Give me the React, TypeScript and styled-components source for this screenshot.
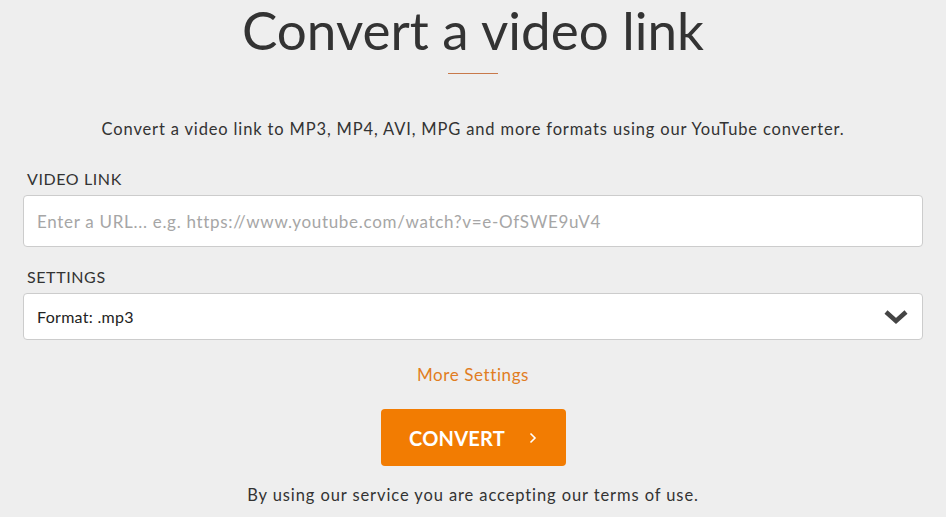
import styled, { createGlobalStyle } from 'styled-components';

const GlobalStyle = createGlobalStyle`
  html, body {
    margin: 0;
    padding: 0;
    background: #eeeeee;
    font-family: Lato, "Open Sans", sans-serif;
    color: #333333;
  }
`;

const Page = styled.main`
  max-width: 900px;
  margin: 0 auto;
  padding: 0 0 20px;
  display: flex;
  flex-direction: column;
  align-items: center;
`;

const Title = styled.h1`
  margin: 0;
  font-size: 53px;
  font-weight: 400;
  line-height: 60px;
  color: #333333;
`;

const Divider = styled.hr`
  width: 50px;
  height: 1px;
  border: 0;
  background: #c8794a;
  margin: 13px 0 0;
`;

const Lead = styled.p`
  margin: 45px 0 0;
  font-size: 16.5px;
  line-height: 20px;
  letter-spacing: 0.85px;
  color: #333333;
`;

const Form = styled.form`
  align-self: stretch;
  display: flex;
  flex-direction: column;
  margin-top: 30px;
`;

const Label = styled.label`
  font-size: 16px;
  line-height: 20px;
  letter-spacing: 0.6px;
  padding-left: 4px;
  margin-bottom: 6px;
  color: #333333;
`;

const Field = styled.div<{ $height: number }>`
  height: ${({ $height }) => $height}px;
  box-sizing: border-box;
  background: #ffffff;
  border: 1px solid #cccccc;
  border-radius: 4px;
  display: flex;
  align-items: center;
  padding: 0 14px 0 13px;
  margin-bottom: 20px;
`;

const Input = styled.input`
  flex: 1;
  border: 0;
  outline: none;
  background: transparent;
  font-family: inherit;
  font-size: 17px;
  letter-spacing: 0.7px;
  color: #333333;
  padding: 0;

  &::placeholder {
    color: #a6a6a6;
  }
`;

const SelectText = styled.span`
  flex: 1;
  font-size: 16px;
  letter-spacing: 0.3px;
  color: #222222;
`;

const MoreLink = styled.a`
  align-self: center;
  margin-top: 4px;
  font-size: 17px;
  line-height: 22px;
  letter-spacing: 0.6px;
  color: #e17d22;
  text-decoration: none;
  cursor: pointer;
`;

const ConvertButton = styled.button`
  align-self: center;
  margin-top: 23px;
  width: 185px;
  height: 57px;
  border: 0;
  border-radius: 4px;
  background: #f27c02;
  color: #ffffff;
  font-family: inherit;
  font-size: 20px;
  font-weight: 700;
  letter-spacing: 0.2px;
  display: flex;
  align-items: center;
  justify-content: center;
  gap: 24px;
  padding-left: 6px;
  cursor: pointer;
`;

const Footnote = styled.p`
  align-self: center;
  margin: 19px 0 0;
  font-size: 16.5px;
  line-height: 20px;
  letter-spacing: 0.9px;
  color: #333333;
`;

const Chevron = () => (
  <svg width="24" height="16" viewBox="0 0 24 16" aria-hidden="true">
    <path d="M2 3 L12 12 L22 3" fill="none" stroke="#444" strokeWidth="4.5" strokeLinejoin="miter" />
  </svg>
);

const Arrow = () => (
  <svg width="8" height="12" viewBox="0 0 8 12" aria-hidden="true">
    <path d="M1.5 1.5 L6 6 L1.5 10.5" fill="none" stroke="#fff" strokeWidth="1.6" />
  </svg>
);

export default function App() {
  return (
    <>
      <GlobalStyle />
      <Page>
        <Title>Convert a video link</Title>
        <Divider />
        <Lead>
          Convert a video link to MP3, MP4, AVI, MPG and more formats using our YouTube converter.
        </Lead>
        <Form onSubmit={(e) => e.preventDefault()}>
          <Label>VIDEO LINK</Label>
          <Field $height={52}>
            <Input placeholder="Enter a URL... e.g. https://www.youtube.com/watch?v=e-OfSWE9uV4" />
          </Field>
          <Label>SETTINGS</Label>
          <Field $height={47}>
            <SelectText>Format: .mp3</SelectText>
            <Chevron />
          </Field>
          <MoreLink>More Settings</MoreLink>
          <ConvertButton type="submit">
            <span>CONVERT</span>
            <Arrow />
          </ConvertButton>
          <Footnote>By using our service you are accepting our terms of use.</Footnote>
        </Form>
      </Page>
    </>
  );
}
